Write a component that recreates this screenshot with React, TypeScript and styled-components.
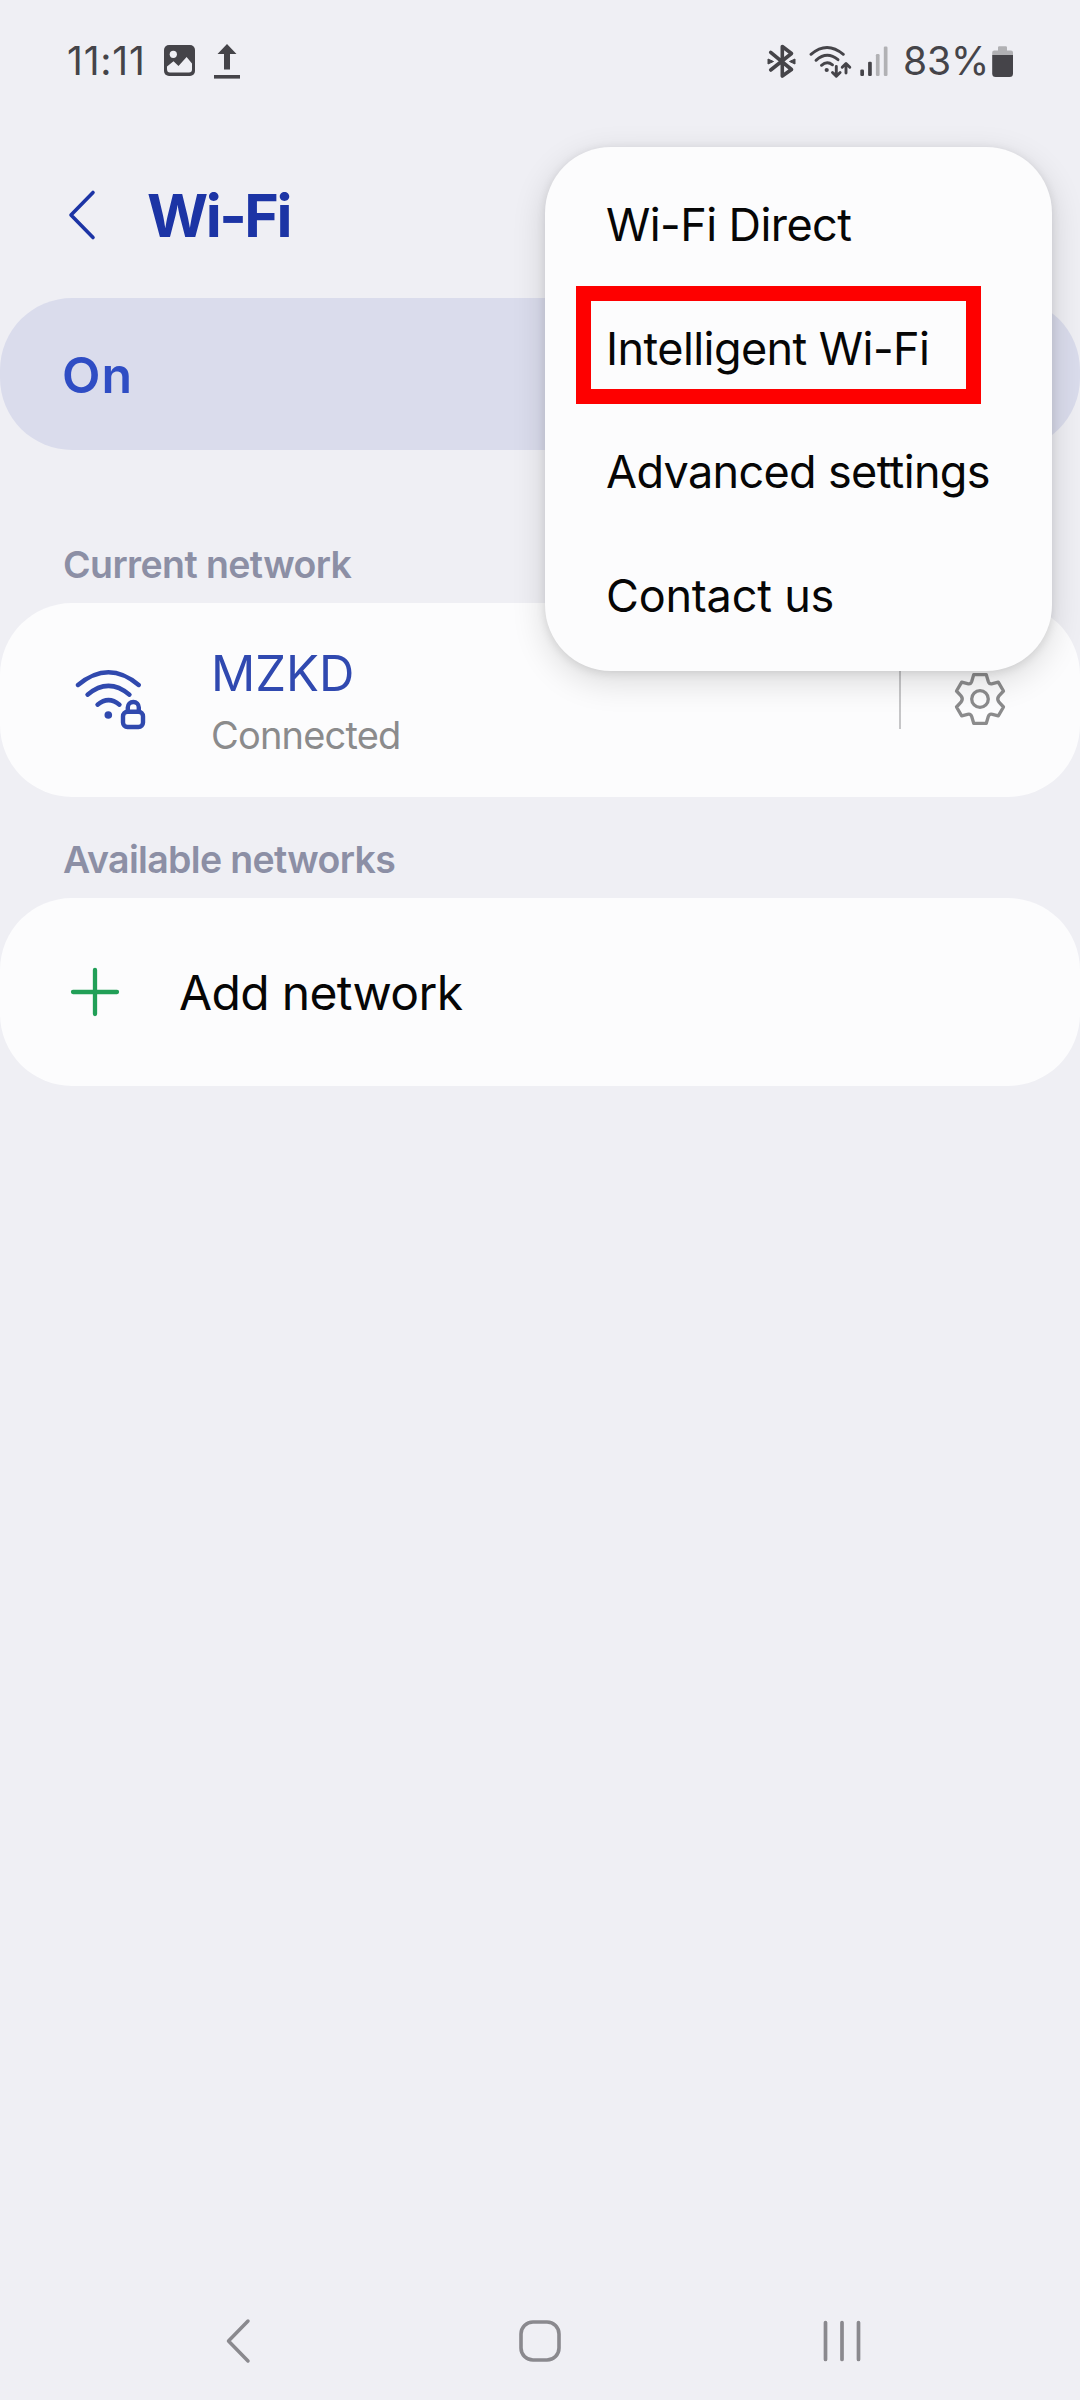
import React from 'react';
import styled, { createGlobalStyle } from 'styled-components';

const GlobalStyle = createGlobalStyle`
  * { box-sizing: border-box; }
  body { margin: 0; background: #efeff4; }
`;

const Screen = styled.div`
  position: relative;
  display: flex;
  flex-direction: column;
  width: 1080px;
  height: 2400px;
  overflow: hidden;
  background: #efeff4;
  font-family: Inter, Roboto, sans-serif;
  color: #060606;
  white-space: nowrap;

  svg {
    display: block;
    flex: none;
  }
`;

const StatusBar = styled.header`
  display: flex;
  justify-content: space-between;
  align-items: center;
  height: 120px;
  padding: 1px 66px 0 67px;
  color: #454449;
  font-size: 39px;
`;

const StatusGroup = styled.div`
  display: flex;
  align-items: center;
`;

const Clock = styled.time`
  margin-right: 18px;
  letter-spacing: 0.8px;
`;

const Percent = styled.span`
  margin: 0 3px 0 15px;
  letter-spacing: -0.2px;
`;

const TitleBar = styled.div`
  display: flex;
  align-items: center;
  height: 178px;
  padding: 12px 0 0 66px;
  color: #1c34a5;
`;

const Title = styled.h1`
  margin: 0 0 0 49px;
  font-size: 59px;
  font-weight: 650;
  letter-spacing: -2.5px;
`;

const SwitchCard = styled.section`
  display: flex;
  align-items: center;
  height: 152px;
  padding: 1px 0 0 62px;
  border-radius: 72px;
  background: #dadcec;
  color: #2f4dc4;
  font-size: 50px;
  font-weight: 600;
  letter-spacing: 1px;
`;

const SectionLabel = styled.h2<{ $gap: number; $tracking: number }>`
  display: flex;
  align-items: center;
  height: 76px;
  margin: ${(p) => p.$gap}px 0 0;
  padding: 0 0 2px 63px;
  color: #8c8fa5;
  font-size: 37.5px;
  font-weight: 600;
  letter-spacing: ${(p) => p.$tracking}px;
`;

const Card = styled.section<{ $height: number }>`
  display: flex;
  align-items: center;
  height: ${(p) => p.$height}px;
  border-radius: 72px;
  background: #fcfcfd;
`;

const NetworkIcon = styled.div`
  padding-left: 74px;
`;

const NetworkText = styled.div`
  display: flex;
  flex-direction: column;
  flex: 1;
  padding: 9px 0 0 63px;
`;

const NetworkName = styled.span`
  color: #3049b0;
  font-size: 49px;
  line-height: 61px;
`;

const NetworkState = styled.span`
  color: #8b8b8c;
  font-size: 38px;
  line-height: 62px;
  letter-spacing: -0.8px;
`;

const Divider = styled.div`
  width: 2px;
  height: 58px;
  background: #c6c6c8;
`;

const SettingsButton = styled.div`
  padding: 0 73px 2px 52px;
`;

const PlusIcon = styled.div`
  padding-left: 69px;
`;

const AddLabel = styled.span`
  padding-left: 58px;
  font-size: 48px;
  letter-spacing: -0.65px;
`;

const Menu = styled.nav`
  position: absolute;
  top: 147px;
  left: 545px;
  display: flex;
  flex-direction: column;
  width: 507px;
  height: 524px;
  padding: 15px 0;
  border-radius: 66px;
  background: #fcfcfd;
  box-shadow: 0 10px 34px rgba(0, 0, 0, 0.14), 0 2px 10px rgba(0, 0, 0, 0.1);
`;

const MenuItem = styled.div<{ $tracking: number }>`
  position: relative;
  display: flex;
  align-items: center;
  height: 124px;
  padding: 2px 0 0 61px;
  font-size: 45px;
  letter-spacing: ${(p) => p.$tracking}px;
`;

const Highlight = styled.div`
  position: absolute;
  top: 0;
  left: 31px;
  width: 405px;
  height: 118px;
  border: 15px solid #fe0000;
`;

const NavBar = styled.footer`
  display: flex;
  justify-content: space-between;
  align-items: center;
  height: 118px;
  margin-top: auto;
  padding: 0 218px 0 224px;
  color: #8a898e;
`;

const ImageGlyph = () => (
  <svg width="31" height="31" viewBox="0 0 31 31">
    <rect width="31" height="31" rx="5" fill="currentColor" />
    <circle cx="9.3" cy="9.3" r="3.6" fill="#efeff4" />
    <path d="M3 24v-2.500L9.500 16.300L14.500 21L22.600 12L28 18.500V24.500Q28 27.500 25 27.500H6Q3 27.500 3 24Z" fill="#efeff4" />
  </svg>
);

const UploadGlyph = styled(({ className }: { className?: string }) => (
  <svg className={className} width="26" height="35" viewBox="0 0 26 35" fill="currentColor">
    <path d="M13 0L22.500 10H16V25.500H10V10H3.500Z" />
    <rect y="31" width="26" height="3.600" />
  </svg>
))`
  margin: 2px 0 0 19px;
`;

const BluetoothGlyph = () => (
  <svg width="29" height="36" viewBox="767 42 29 36">
    <path
      d="M770.700 51.300L791.500 68.500L782.300 75V45.500L791.500 52.500L770.700 69"
      fill="none"
      stroke="currentColor"
      strokeWidth="3.600"
      strokeLinejoin="round"
      strokeLinecap="round"
    />
    <path d="M768 58L773.500 60.500L768 63Z M795 58L789.500 60.500L795 63Z" fill="currentColor" stroke="currentColor" strokeLinejoin="round" />
  </svg>
);

const WifiTrafficGlyph = styled(({ className }: { className?: string }) => (
  <svg className={className} width="44" height="36" viewBox="808 42 44 36">
    <g fill="none" stroke="currentColor" strokeWidth="2.900" strokeLinecap="round" strokeLinejoin="round">
      <path d="M811 53.300Q827 39.500 843.300 53.300" />
      <path d="M816 59.300Q827 49.500 838 58.700" />
      <path d="M821.500 64.300Q827 59.500 832.500 63.800" />
      <path d="M836.300 65.500V75M832.500 71.500L836.300 75.300L840.100 71.500" />
      <path d="M846 72V62.800M842.200 66.300L846 62.500L849.800 66.300" />
    </g>
    <circle cx="826.700" cy="69" r="2.100" fill="currentColor" />
  </svg>
))`
  margin-left: 12px;
`;

const SignalGlyph = styled(({ className }: { className?: string }) => (
  <svg className={className} width="29" height="36" viewBox="859 42 29 36" fill="currentColor">
    <rect x="860.300" y="68.500" width="3.700" height="6.500" rx="1.200" />
    <rect x="868.100" y="60.700" width="3.700" height="14.300" rx="1.200" />
    <rect x="875.900" y="53" width="3.700" height="22" rx="1.200" fill="#b1b1b4" />
    <rect x="883.800" y="45.500" width="3.700" height="29.500" rx="1.200" fill="#b1b1b4" />
  </svg>
))`
  margin-left: 7px;
`;

const BatteryGlyph = () => (
  <svg width="22" height="36" viewBox="992 42 22 36">
    <path d="M998 46.500Q998 45.300 999.200 45.300H1005.800Q1007 45.300 1007 46.500V49.500H1011Q1013 49.500 1013 51.500V54H992.200V51.500Q992.200 49.500 994.200 49.500H998Z" fill="#b1b1b4" />
    <path d="M992.200 54H1013V72.500Q1013 76 1009.500 76H995.700Q992.200 76 992.200 72.500Z" fill="currentColor" />
  </svg>
);

const BackGlyph = () => (
  <svg width="32" height="52" viewBox="0 0 32 52">
    <path d="M27 3.500L5 26L27 48.500" fill="none" stroke="currentColor" strokeWidth="3.600" strokeLinecap="round" strokeLinejoin="round" />
  </svg>
);

const SecuredWifiGlyph = () => (
  <svg width="74" height="64" viewBox="74 669 74 64">
    <g fill="none" stroke="#3049ae" strokeWidth="4.400" strokeLinecap="round" strokeLinejoin="round">
      <path d="M78 686Q108.500 660.500 138.700 686" />
      <path d="M87.500 695.700Q108.500 678 129.500 695.700" />
      <path d="M97.500 705.700Q108.500 696.500 119.500 705.700" />
      <rect x="123" y="712.700" width="20" height="15.300" rx="4.500" />
      <path d="M127.800 712V708.500A5.500 5.500 0 0 1 138.800 708.500V712" />
    </g>
    <circle cx="108.300" cy="716" r="3.800" fill="#3049ae" />
  </svg>
);

const GearGlyph = () => (
  <svg width="54" height="56" viewBox="-27 -28 54 56">
    <g fill="none" stroke="#8b8b8c" strokeWidth="3.300" strokeLinejoin="round">
      <circle r="8.300" />
      <path d="M-6.300 -24.300H6.300L8.300 -17.500Q9.300 -14.500 12.500 -15.300L18.300 -16.800L23.500 -8L19 -3.200Q16.500 0 19 3.200L23.500 8L18.300 16.800L12.500 15.300Q9.300 14.500 8.300 17.500L6.300 24.300H-6.300L-8.300 17.500Q-9.300 14.500 -12.500 15.300L-18.300 16.800L-23.500 8L-19 3.200Q-16.500 0 -19 -3.200L-23.500 -8L-18.300 -16.800L-12.500 -15.300Q-9.300 -14.500 -8.300 -17.500Z" />
    </g>
  </svg>
);

const PlusGlyph = () => (
  <svg width="52" height="52" viewBox="0 0 52 52">
    <path d="M26 4V48M4 26H48" stroke="#219f57" strokeWidth="4.300" strokeLinecap="round" />
  </svg>
);

const NavBackGlyph = () => (
  <svg width="34" height="46" viewBox="0 0 34 46">
    <path d="M24 3L4.500 23L24 43" fill="none" stroke="currentColor" strokeWidth="3.500" strokeLinecap="round" strokeLinejoin="round" />
  </svg>
);

const NavHomeGlyph = () => (
  <svg width="44" height="46" viewBox="0 0 44 46">
    <rect x="3" y="4" width="38" height="38" rx="12" fill="none" stroke="currentColor" strokeWidth="3.600" />
  </svg>
);

const NavRecentsGlyph = () => (
  <svg width="40" height="46" viewBox="0 0 40 46">
    <path d="M3.500 4.500V41.500M20 4.500V41.500M36.500 4.500V41.500" stroke="currentColor" strokeWidth="3.700" strokeLinecap="round" />
  </svg>
);

const menuItems = [
  { label: 'Wi-Fi Direct', tracking: -0.58 },
  { label: 'Intelligent Wi-Fi', tracking: -0.57, highlighted: true },
  { label: 'Advanced settings', tracking: -0.66 },
  { label: 'Contact us', tracking: -0.2 },
];

export default function App() {
  return (
    <Screen>
      <GlobalStyle />
      <StatusBar>
        <StatusGroup>
          <Clock>11:11</Clock>
          <ImageGlyph />
          <UploadGlyph />
        </StatusGroup>
        <StatusGroup>
          <BluetoothGlyph />
          <WifiTrafficGlyph />
          <SignalGlyph />
          <Percent>83%</Percent>
          <BatteryGlyph />
        </StatusGroup>
      </StatusBar>

      <TitleBar>
        <BackGlyph />
        <Title>Wi-Fi</Title>
      </TitleBar>

      <SwitchCard>On</SwitchCard>

      <SectionLabel $gap={77} $tracking={-0.6}>Current network</SectionLabel>
      <Card $height={194}>
        <NetworkIcon>
          <SecuredWifiGlyph />
        </NetworkIcon>
        <NetworkText>
          <NetworkName>MZKD</NetworkName>
          <NetworkState>Connected</NetworkState>
        </NetworkText>
        <Divider />
        <SettingsButton>
          <GearGlyph />
        </SettingsButton>
      </Card>

      <SectionLabel $gap={25} $tracking={-0.67}>Available networks</SectionLabel>
      <Card $height={188}>
        <PlusIcon>
          <PlusGlyph />
        </PlusIcon>
        <AddLabel>Add network</AddLabel>
      </Card>

      <NavBar>
        <NavBackGlyph />
        <NavHomeGlyph />
        <NavRecentsGlyph />
      </NavBar>

      <Menu>
        {menuItems.map((item) => (
          <MenuItem key={item.label} $tracking={item.tracking}>
            {item.label}
            {item.highlighted && <Highlight />}
          </MenuItem>
        ))}
      </Menu>
    </Screen>
  );
}
